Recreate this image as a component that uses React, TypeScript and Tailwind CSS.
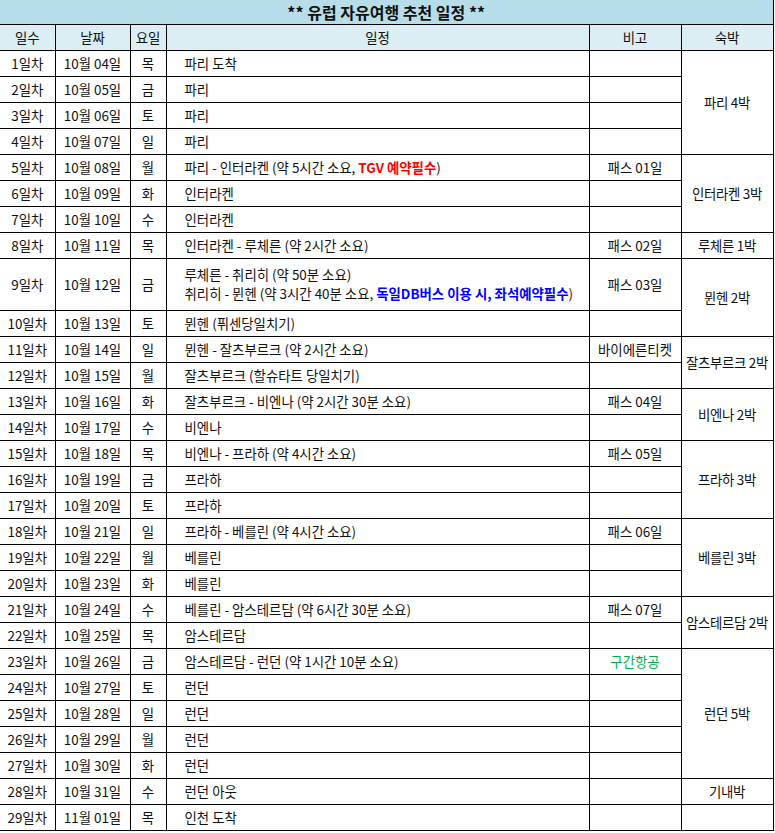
import React from 'react';

type Row = {
  day: string;
  date: string;
  dow: string;
  plan: React.ReactNode;
  note?: React.ReactNode;
  stay?: { label: string; span: number };
  tall?: boolean;
};

const red = (t: string) => <span className="font-bold text-[#ff0000]">{t}</span>;
const blue = (t: string) => <span className="font-bold text-[#0000ff]">{t}</span>;

const rows: Row[] = [
  { day: '1일차', date: '10월 04일', dow: '목', plan: '파리 도착', stay: { label: '파리 4박', span: 4 } },
  { day: '2일차', date: '10월 05일', dow: '금', plan: '파리' },
  { day: '3일차', date: '10월 06일', dow: '토', plan: '파리' },
  { day: '4일차', date: '10월 07일', dow: '일', plan: '파리' },
  {
    day: '5일차', date: '10월 08일', dow: '월',
    plan: <>파리 - 인터라켄 (약 5시간 소요, {red('TGV 예약필수')})</>,
    note: '패스 01일', stay: { label: '인터라켄 3박', span: 3 },
  },
  { day: '6일차', date: '10월 09일', dow: '화', plan: '인터라켄' },
  { day: '7일차', date: '10월 10일', dow: '수', plan: '인터라켄' },
  { day: '8일차', date: '10월 11일', dow: '목', plan: '인터라켄 - 루체른 (약 2시간 소요)', note: '패스 02일', stay: { label: '루체른 1박', span: 1 } },
  {
    day: '9일차', date: '10월 12일', dow: '금', tall: true,
    plan: (
      <div className="flex flex-col leading-[19px]">
        <span>루체른 - 취리히 (약 50분 소요)</span>
        <span>취리히 - 뮌헨 (약 3시간 40분 소요, {blue('독일DB버스 이용 시, 좌석예약필수')})</span>
      </div>
    ),
    note: '패스 03일', stay: { label: '뮌헨 2박', span: 2 },
  },
  { day: '10일차', date: '10월 13일', dow: '토', plan: '뮌헨 (퓌센당일치기)' },
  { day: '11일차', date: '10월 14일', dow: '일', plan: '뮌헨 - 잘츠부르크 (약 2시간 소요)', note: '바이에른티켓', stay: { label: '잘츠부르크 2박', span: 2 } },
  { day: '12일차', date: '10월 15일', dow: '월', plan: '잘츠부르크 (할슈타트 당일치기)' },
  { day: '13일차', date: '10월 16일', dow: '화', plan: '잘츠부르크 - 비엔나 (약 2시간 30분 소요)', note: '패스 04일', stay: { label: '비엔나 2박', span: 2 } },
  { day: '14일차', date: '10월 17일', dow: '수', plan: '비엔나' },
  { day: '15일차', date: '10월 18일', dow: '목', plan: '비엔나 - 프라하 (약 4시간 소요)', note: '패스 05일', stay: { label: '프라하 3박', span: 3 } },
  { day: '16일차', date: '10월 19일', dow: '금', plan: '프라하' },
  { day: '17일차', date: '10월 20일', dow: '토', plan: '프라하' },
  { day: '18일차', date: '10월 21일', dow: '일', plan: '프라하 - 베를린 (약 4시간 소요)', note: '패스 06일', stay: { label: '베를린 3박', span: 3 } },
  { day: '19일차', date: '10월 22일', dow: '월', plan: '베를린' },
  { day: '20일차', date: '10월 23일', dow: '화', plan: '베를린' },
  { day: '21일차', date: '10월 24일', dow: '수', plan: '베를린 - 암스테르담 (약 6시간 30분 소요)', note: '패스 07일', stay: { label: '암스테르담 2박', span: 2 } },
  { day: '22일차', date: '10월 25일', dow: '목', plan: '암스테르담' },
  {
    day: '23일차', date: '10월 26일', dow: '금', plan: '암스테르담 - 런던 (약 1시간 10분 소요)',
    note: <span className="text-[#00b050]">구간항공</span>, stay: { label: '런던 5박', span: 5 },
  },
  { day: '24일차', date: '10월 27일', dow: '토', plan: '런던' },
  { day: '25일차', date: '10월 28일', dow: '일', plan: '런던' },
  { day: '26일차', date: '10월 29일', dow: '월', plan: '런던' },
  { day: '27일차', date: '10월 30일', dow: '화', plan: '런던' },
  { day: '28일차', date: '10월 31일', dow: '수', plan: '런던 아웃', stay: { label: '기내박', span: 1 } },
  { day: '29일차', date: '11월 01일', dow: '목', plan: '인천 도착', stay: { label: '', span: 1 } },
];

const cell = 'border border-black p-0 text-center align-middle whitespace-nowrap';

export default function App() {
  return (
    <div
      className="bg-white w-[775px] h-[833px] text-[13.4px] text-[#111]"
      style={{ fontFamily: '"Noto Sans CJK KR", "Noto Sans", sans-serif' }}
    >
      <table className="border-collapse table-fixed w-[773px] leading-[18px]">
        <colgroup>
          <col className="w-[55px]" />
          <col className="w-[75px]" />
          <col className="w-[36px]" />
          <col className="w-[423px]" />
          <col className="w-[92px]" />
          <col className="w-[92px]" />
        </colgroup>
        <tbody>
          <tr className="h-[24px]">
            <td colSpan={6} className={`${cell} border-l-0 border-t-0 bg-[#b7dee8] font-bold text-[16px] leading-[20px]`}>
              ** 유럽 자유여행 추천 일정 **
            </td>
          </tr>
          <tr className="h-[26px] bg-[#daeef3]">
            <td className={`${cell} border-l-0`}>일수</td>
            <td className={cell}>날짜</td>
            <td className={cell}>요일</td>
            <td className={cell}>일정</td>
            <td className={cell}>비고</td>
            <td className={cell}>숙박</td>
          </tr>
          {rows.map((r) => (
            <tr key={r.day} className={r.tall ? 'h-[52px]' : 'h-[26px]'}>
              <td className={`${cell} border-l-0`}>{r.day}</td>
              <td className={cell}>{r.date}</td>
              <td className={cell}>{r.dow}</td>
              <td className={`${cell} !text-left pl-[18px]`}>{r.plan}</td>
              <td className={cell}>{r.note}</td>
              {r.stay && (
                <td rowSpan={r.stay.span} className={`${cell} tracking-[-0.3px]`}>
                  {r.stay.label}
                </td>
              )}
            </tr>
          ))}
        </tbody>
      </table>
    </div>
  );
}
